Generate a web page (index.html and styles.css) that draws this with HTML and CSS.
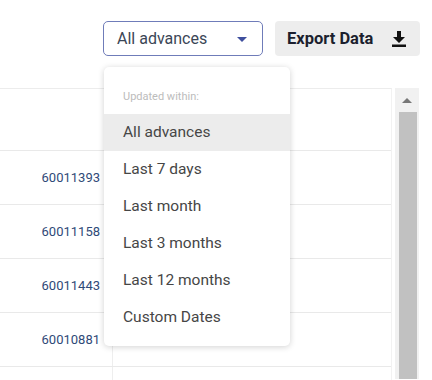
FILE: index.html
```html
<!DOCTYPE html>
<html lang="en">
<head>
    <meta charset="UTF-8">
    <meta name="viewport" content="width=device-width, initial-scale=1.0">
    <title>Advances</title>
    <link rel="stylesheet" href="styles.css">
</head>
<body>
    <div class="toolbar">
        <div class="select-wrap">
            <div class="select">
                <span>All advances</span>
                <span class="caret"></span>
            </div>
            <div class="menu">
                <div class="menu-label">Updated within:</div>
                <div class="menu-item active">All advances</div>
                <div class="menu-item">Last 7 days</div>
                <div class="menu-item">Last month</div>
                <div class="menu-item">Last 3 months</div>
                <div class="menu-item">Last 12 months</div>
                <div class="menu-item">Custom Dates</div>
            </div>
        </div>
        <button class="export">
            Export Data
            <svg width="14" height="16" viewBox="0 0 14 16">
                <path d="M5 0h4v6h4l-6 6-6-6h4z" fill="#111"/>
                <rect x="0" y="13.5" width="14" height="2.5" fill="#111"/>
            </svg>
        </button>
    </div>

    <div class="grid-area">
        <div class="table">
            <div class="row head"><div class="cell id"></div><div class="cell"></div></div>
            <div class="row"><div class="cell id">60011393</div><div class="cell"></div></div>
            <div class="row"><div class="cell id">60011158</div><div class="cell"></div></div>
            <div class="row"><div class="cell id">60011443</div><div class="cell"></div></div>
            <div class="row"><div class="cell id">60010881</div><div class="cell"></div></div>
            <div class="row last"><div class="cell id"></div><div class="cell"></div></div>
        </div>
        <div class="scrollbar">
            <div class="scroll-up"><span></span></div>
            <div class="thumb"></div>
        </div>
    </div>
</body>
</html>
```

FILE: styles.css
```css
body {
    margin: 0;
    font-family: Roboto, "Liberation Sans", Arial, sans-serif;
    background-color: #fff;
    overflow: hidden;
    height: 380px;
}

.toolbar {
    display: flex;
    justify-content: flex-end;
    gap: 12px;
    padding: 21px 12px 0 0;
    height: 35px;
}

.select-wrap {
    position: relative;
}

.select {
    box-sizing: border-box;
    width: 160px;
    height: 35px;
    border: 1.5px solid #6f7cb9;
    border-radius: 5px;
    display: flex;
    align-items: center;
    justify-content: space-between;
    padding: 0 15px 0 13px;
    font-size: 16px;
    color: #3b4656;
}

.caret {
    width: 0;
    height: 0;
    border-left: 5px solid transparent;
    border-right: 5px solid transparent;
    border-top: 5px solid #3f4f9e;
    margin-top: 2px;
}

.menu {
    position: absolute;
    top: 46px;
    left: 1px;
    width: 186px;
    background: #fff;
    border-radius: 5px;
    box-shadow: 0 1px 6px rgba(0, 0, 0, 0.18);
    padding: 10px 0 10px;
    z-index: 2;
}

.menu-label {
    font-size: 11px;
    color: #bcbcbc;
    padding: 13px 19px 11px;
}

.menu-item {
    height: 37px;
    line-height: 37px;
    padding: 0 19px;
    font-size: 15.5px;
    color: #464646;
}

.menu-item.active {
    background-color: #ececec;
}

.export {
    box-sizing: border-box;
    width: 145px;
    height: 35px;
    border: none;
    border-radius: 4px;
    background-color: #ededed;
    font-family: Roboto, "Liberation Sans", Arial, sans-serif;
    font-size: 16.5px;
    font-weight: bold;
    color: #1c1f2e;
    display: flex;
    align-items: center;
    justify-content: space-between;
    padding: 0 14px 0 12px;
}

.grid-area {
    display: flex;
    margin-top: 32px;
    padding-right: 13px;
}

.table {
    flex: 1;
    border-top: 1px solid #ececec;
    border-right: 1px solid #f2f2f2;
}

.row {
    box-sizing: border-box;
    display: flex;
    height: 54px;
    border-bottom: 1px solid #e9e9e9;
}

.row.head {
    height: 62px;
}

.row.last {
    height: 13px;
    border-bottom: none;
}

.cell {
    flex: 1;
}

.cell.id {
    flex: 0 0 100px;
    padding-right: 12px;
    border-right: 1px solid #eeeeee;
    display: flex;
    align-items: center;
    justify-content: flex-end;
    font-size: 13px;
    color: #2f4a78;
}

.scrollbar {
    width: 24px;
    margin-left: 3px;
    background-color: #f1f1f1;
    display: flex;
    flex-direction: column;
    height: 291px;
}

.scroll-up {
    height: 24px;
    display: flex;
    align-items: center;
    justify-content: center;
}

.scroll-up span {
    width: 0;
    height: 0;
    border-left: 5px solid transparent;
    border-right: 5px solid transparent;
    border-bottom: 5px solid #777;
}

.thumb {
    flex: 1;
    margin: 0 2px 0 4px;
    background-color: #c1c1c1;
}
```
